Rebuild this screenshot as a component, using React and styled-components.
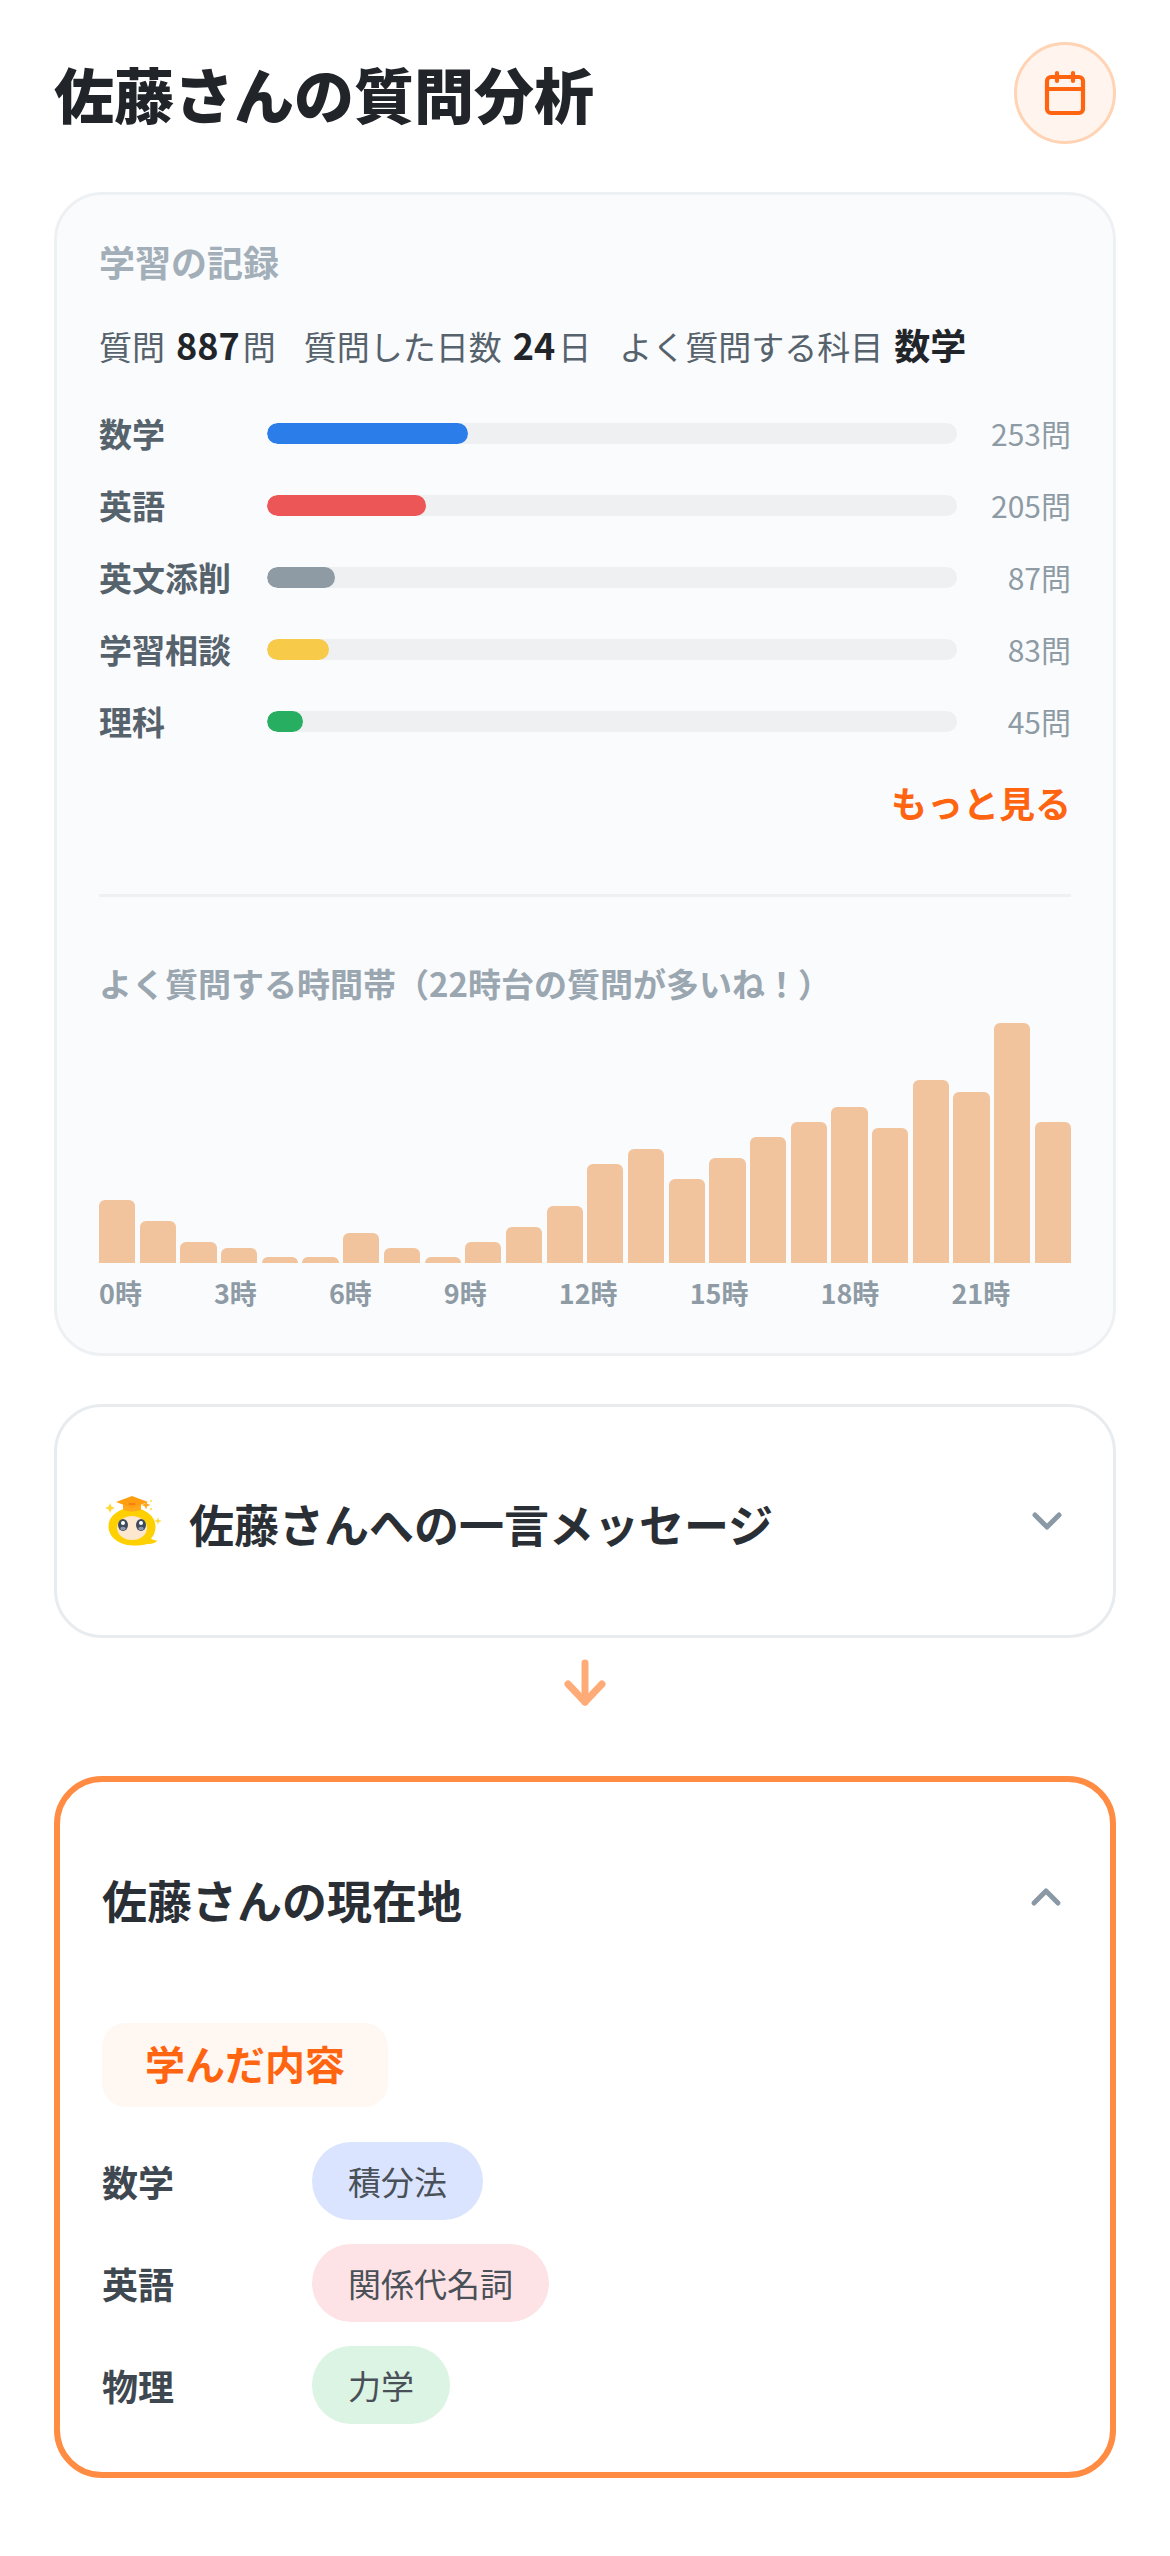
import React from 'react';
import styled, { createGlobalStyle } from 'styled-components';
import { Calendar, ChevronDown, ChevronUp } from 'lucide-react';

const subjects = [
  { name: '数学', count: 253, rate: 29.1, color: '#2b7de9' },
  { name: '英語', count: 205, rate: 23, color: '#ec5656' },
  { name: '英文添削', count: 87, rate: 9.9, color: '#8e9ba5' },
  { name: '学習相談', count: 83, rate: 9, color: '#f7ca4a' },
  { name: '理科', count: 45, rate: 5.2, color: '#27ae60' },
];

const hours = [63, 42, 21, 15, 6, 6, 30, 15, 6, 21, 36, 57, 99, 114, 84, 105, 126, 141, 156, 135, 183, 171, 240, 141];
const hourLabels = ['0時', '3時', '6時', '9時', '12時', '15時', '18時', '21時'];

const learned = [
  { name: '数学', topic: '積分法', bg: '#dbe4ff' },
  { name: '英語', topic: '関係代名詞', bg: '#fde3e6' },
  { name: '物理', topic: '力学', bg: '#dbf4e3' },
];

function Mascot() {
  return (
    <svg width="60" height="60" viewBox="0 0 60 60" fill="none">
      <path d="M4.500 35.500C4.500 25 15 17 28 17s23.500 8 23.500 18.500c0 5-1.500 9-4.500 12 2 1.500 4.500 2 6.500 2-2 2.500-6 4-10 3.500-4 1.500-9 1.500-15 1.500C15 54 4.500 46 4.500 35.500z" fill="#ffd000" />
      <ellipse cx="28" cy="37" rx="15" ry="12" fill="#fde8cf" />
      <ellipse cx="19" cy="34" rx="5" ry="6" fill="#3f4a5c" />
      <ellipse cx="37" cy="34" rx="5" ry="6" fill="#3f4a5c" />
      <ellipse cx="19" cy="37.500" rx="2.800" ry="1.800" fill="#8b97ad" />
      <ellipse cx="37" cy="37.500" rx="2.800" ry="1.800" fill="#8b97ad" />
      <circle cx="19" cy="32" r="2" fill="#fff" />
      <circle cx="37" cy="32" r="2" fill="#fff" />
      <path d="M19 11v7.500c4 2.500 14 2.500 18 0V11z" fill="#ffa81c" />
      <path d="M28 5l16 6-16 6-16-6z" fill="#ff9f0f" />
      <path d="M25 13h6" stroke="#f0601a" strokeWidth="1" strokeLinecap="round" />
      <path d="M6 12l1.500 3.500L11 17l-3.500 1.500L6 22l-1.500-3.500L1 17l3.500-1.500z" fill="#ffd83a" />
      <path d="M42 9.500l1.200 3.300 3.300 1.200-3.300 1.200L42 18.500l-1.200-3.300-3.300-1.200 3.300-1.200z" fill="#ffa81c" />
      <path d="M54 26l.9 3.100 3.100.9-3.100.9-.9 3.100-.9-3.100-3.100-.9 3.100-.9z" fill="#ffd83a" />
      <circle cx="47" cy="10" r="1" fill="#ffd83a" />
      <circle cx="47" cy="18" r="1" fill="#ffd83a" />
    </svg>
  );
}

function FlowArrowIcon() {
  return (
    <svg width="48" height="48" viewBox="0 0 48 48" fill="none" stroke="#ffab78" strokeWidth="7" strokeLinecap="round" strokeLinejoin="round">
      <path d="M24 4v39" />
      <path d="M7 25l17 18 17-18" />
    </svg>
  );
}

export default function App() {
  return (
    <Page>
      <GlobalStyle />
      <Header>
        <Title>佐藤さんの質問分析</Title>
        <CalendarButton>
          <Calendar size={48} strokeWidth={2.1} />
        </CalendarButton>
      </Header>

      <RecordCard>
        <CardLabel>学習の記録</CardLabel>
        <Stats>
          <span>質問<Strong>887</Strong>問</span>
          <span>質問した日数<Strong>24</Strong>日</span>
          <span>よく質問する科目<Strong>数学</Strong></span>
        </Stats>
        <Subjects>
          {subjects.map((s) => (
            <SubjectRow key={s.name}>
              <SubjectName>{s.name}</SubjectName>
              <Track>
                <Fill $color={s.color} style={{ width: `${s.rate}%` }} />
              </Track>
              <Count>{s.count}問</Count>
            </SubjectRow>
          ))}
        </Subjects>
        <MoreLink>もっと見る</MoreLink>
        <Divider />
        <ChartLabel>よく質問する時間帯（22時台の質問が多いね！）</ChartLabel>
        <Chart>
          {hours.map((h, i) => (
            <Bar key={i} style={{ height: h }} />
          ))}
        </Chart>
        <Axis>
          {hourLabels.map((l) => (
            <span key={l}>{l}</span>
          ))}
        </Axis>
      </RecordCard>

      <MessageCard>
        <MessageTitle>
          <Mascot />
          <SectionTitle>佐藤さんへの一言メッセージ</SectionTitle>
        </MessageTitle>
        <ChevronDown size={48} strokeWidth={2.5} color="#8a99a5" />
      </MessageCard>

      <FlowArrow>
        <FlowArrowIcon />
      </FlowArrow>

      <LocationCard>
        <LocationHead>
          <SectionTitle>佐藤さんの現在地</SectionTitle>
          <ChevronUp size={48} strokeWidth={2.5} color="#8a99a5" />
        </LocationHead>
        <LearnedTag>学んだ内容</LearnedTag>
        <LearnedList>
          {learned.map((l) => (
            <LearnedRow key={l.name}>
              <LearnedName>{l.name}</LearnedName>
              <Chip $bg={l.bg}>{l.topic}</Chip>
            </LearnedRow>
          ))}
        </LearnedList>
      </LocationCard>
    </Page>
  );
}

const GlobalStyle = createGlobalStyle`
  body {
    margin: 0;
    background: #ffffff;
    font-family: "Noto Sans CJK JP", "Noto Sans", sans-serif;
  }
`;

const Page = styled.div`
  width: 1170px;
  padding: 42px 54px 78px;
  box-sizing: border-box;
`;

const Header = styled.header`
  display: flex;
  align-items: center;
  justify-content: space-between;
  margin-bottom: 48px;
`;

const Title = styled.h1`
  margin: 0;
  font-size: 60px;
  line-height: 102px;
  font-weight: 900;
  color: #212529;
`;

const CalendarButton = styled.div`
  width: 102px;
  height: 102px;
  box-sizing: border-box;
  border: 3px solid #ffd3b3;
  border-radius: 50%;
  background: #fff5ee;
  color: #ff6411;
  display: flex;
  align-items: center;
  justify-content: center;
`;

const RecordCard = styled.section`
  background: #fafbfd;
  border: 3px solid #eef1f4;
  border-radius: 48px;
  padding: 39px 42px 40px;
  box-sizing: border-box;
  margin-bottom: 48px;
`;

const CardLabel = styled.h2`
  margin: 0 0 29px;
  font-size: 36px;
  line-height: 54px;
  font-weight: 700;
  color: #a3afb8;
`;

const Stats = styled.div`
  display: flex;
  gap: 28px;
  font-size: 33px;
  line-height: 54px;
  color: #56626c;
  margin-bottom: 36px;
`;

const Strong = styled.strong`
  font-size: 36px;
  font-weight: 700;
  color: #212529;
  margin: 0 3px 0 11px;
`;

const Subjects = styled.div`
  display: flex;
  flex-direction: column;
  gap: 24px;
`;

const SubjectRow = styled.div`
  display: grid;
  grid-template-columns: 168px 690px 1fr;
  align-items: center;
  height: 48px;
`;

const SubjectName = styled.span`
  font-size: 33px;
  font-weight: 700;
  color: #56626c;
`;

const Track = styled.div`
  height: 21px;
  border-radius: 12px;
  background: #eef0f2;
  overflow: hidden;
`;

const Fill = styled.div`
  height: 100%;
  border-radius: 12px;
  background: ${(p) => p.$color};
`;

const Count = styled.span`
  font-size: 30px;
  text-align: right;
  color: #8e9ba5;
`;

const MoreLink = styled.div`
  margin-top: 30px;
  text-align: right;
  font-size: 36px;
  line-height: 54px;
  font-weight: 700;
  color: #ff6411;
`;

const Divider = styled.hr`
  margin: 65px 0 62px;
  border: 0;
  border-top: 3px solid #eef0f2;
`;

const ChartLabel = styled.div`
  font-size: 33px;
  line-height: 48px;
  font-weight: 700;
  color: #9aa6b0;
  margin-bottom: 16px;
`;

const Chart = styled.div`
  display: flex;
  align-items: flex-end;
  gap: 4.500px;
  height: 240px;
`;

const Bar = styled.div`
  flex: 1;
  background: #f2c49d;
  border-radius: 6px 6px 0 0;
`;

const Axis = styled.div`
  display: flex;
  gap: 72px;
  margin-top: 10px;
  font-size: 27px;
  line-height: 40px;
  font-weight: 700;
  color: #8e9ba5;
`;

const MessageCard = styled.section`
  height: 234px;
  box-sizing: border-box;
  background: #ffffff;
  border: 3px solid #e9ecef;
  border-radius: 48px;
  padding: 0 42px 0 47px;
  display: flex;
  align-items: center;
  justify-content: space-between;
`;

const MessageTitle = styled.div`
  display: flex;
  align-items: center;
  gap: 25px;
`;

const SectionTitle = styled.h2`
  margin: 0;
  padding-top: 6px;
  font-size: 45px;
  line-height: 66px;
  font-weight: 700;
  color: #2a2f35;
`;

const FlowArrow = styled.div`
  display: flex;
  justify-content: center;
  padding: 21px 0 69px;
  height: 48px;
`;

const LocationCard = styled.section`
  height: 702px;
  box-sizing: border-box;
  background: #ffffff;
  border: 6px solid #ff8c42;
  border-radius: 48px;
  padding: 79px 40px 0 42px;
`;

const LocationHead = styled.div`
  display: flex;
  align-items: center;
  justify-content: space-between;
  margin-bottom: 90px;
`;

const LearnedTag = styled.div`
  display: inline-block;
  padding: 0 43px;
  height: 84px;
  line-height: 80px;
  border-radius: 24px;
  background: #fff7f1;
  font-size: 40px;
  font-weight: 700;
  color: #ff6411;
`;

const LearnedList = styled.div`
  display: flex;
  flex-direction: column;
  gap: 24px;
  margin-top: 35px;
`;

const LearnedRow = styled.div`
  display: flex;
  align-items: center;
`;

const LearnedName = styled.span`
  width: 210px;
  font-size: 36px;
  font-weight: 700;
  color: #3f4850;
`;

const Chip = styled.span`
  height: 78px;
  line-height: 78px;
  padding: 0 36px;
  border-radius: 39px;
  background: ${(p) => p.$bg};
  font-size: 33px;
  color: #495057;
`;
